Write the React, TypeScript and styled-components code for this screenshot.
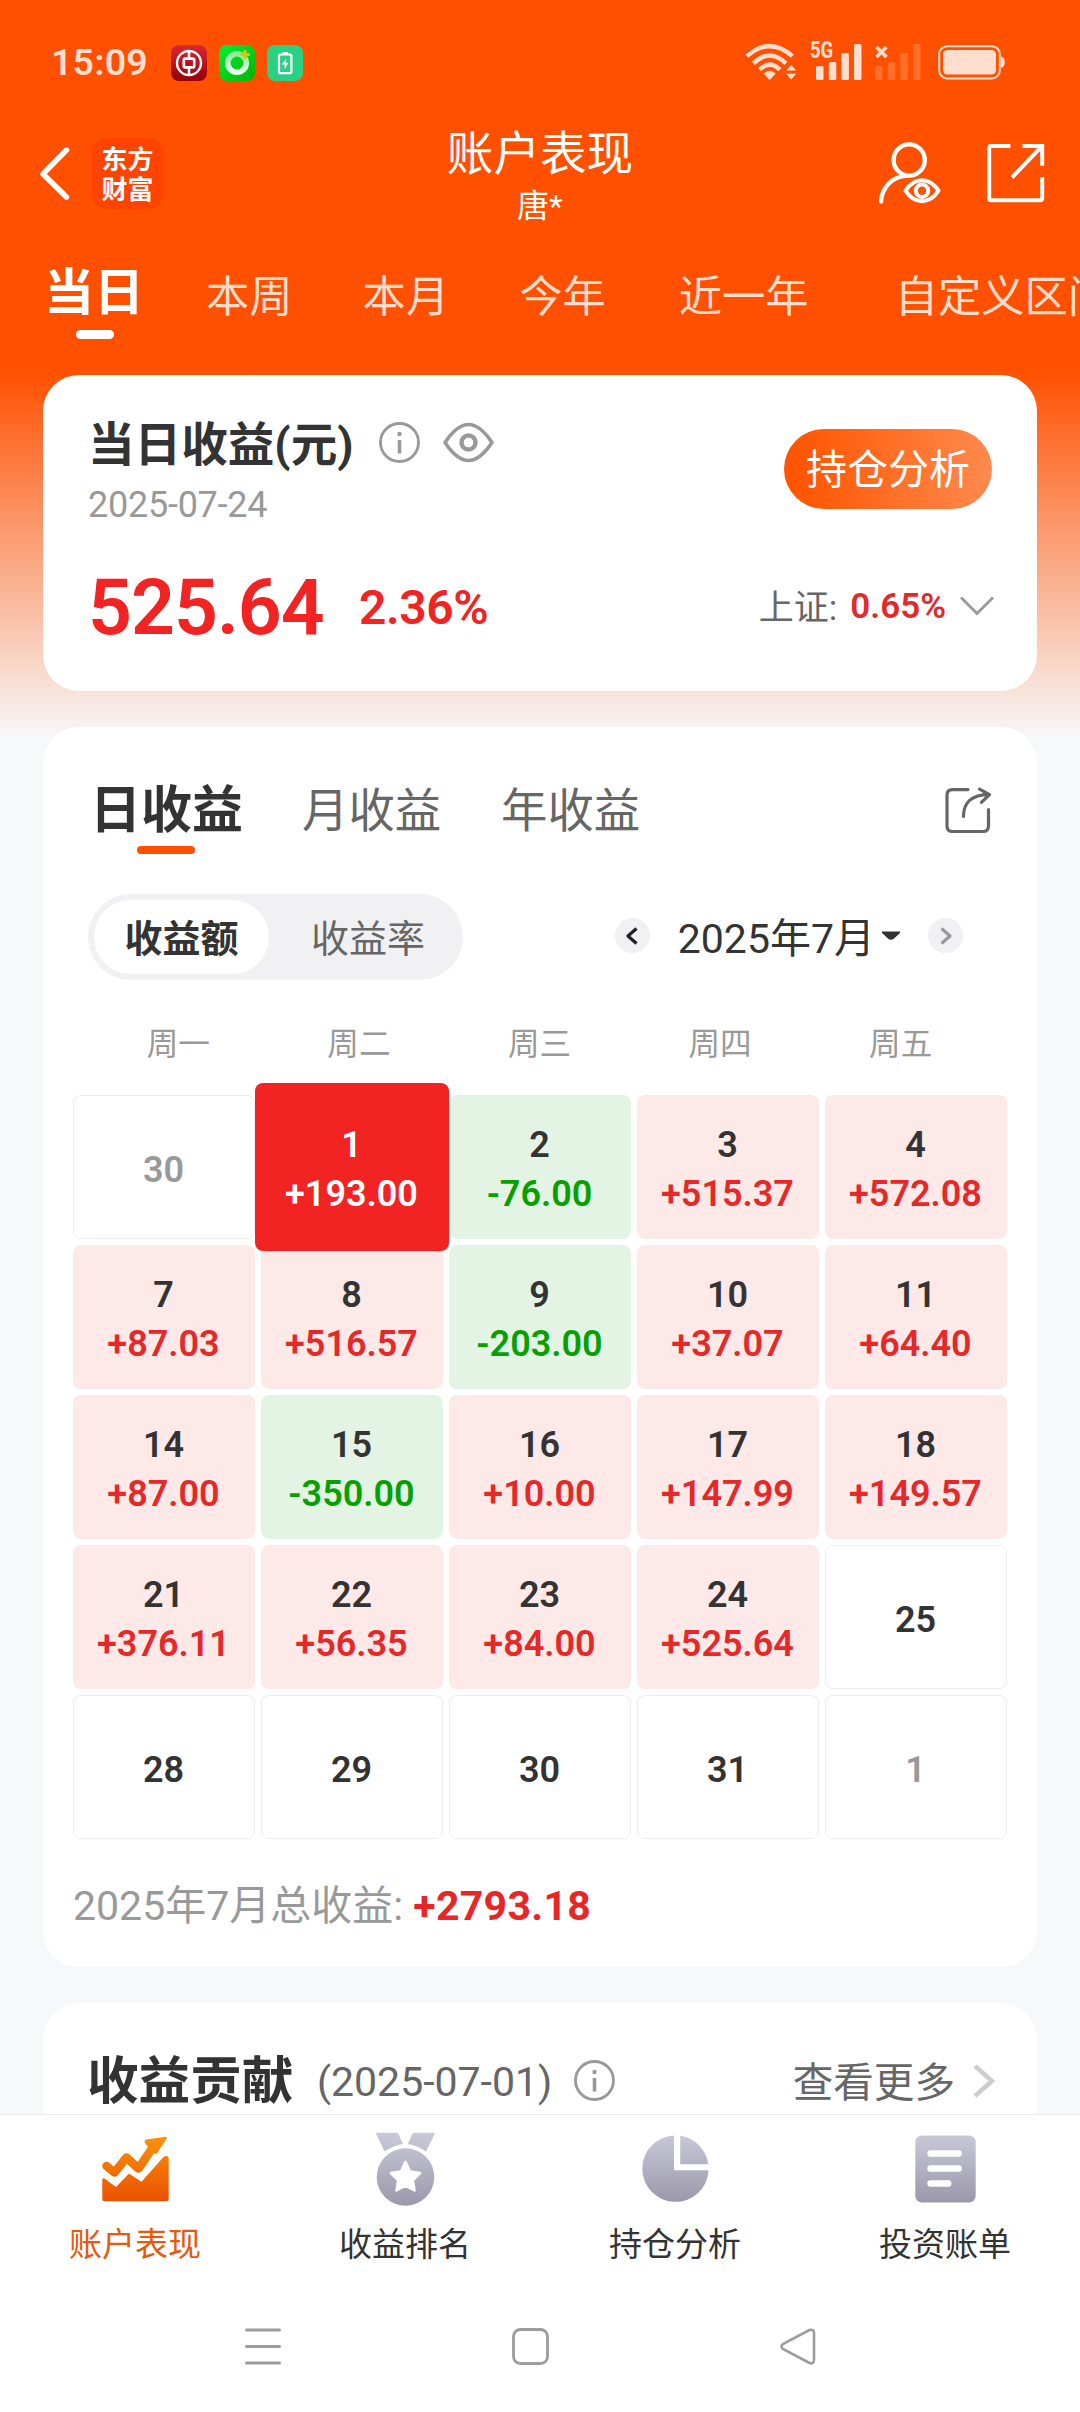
import React from 'react';
import styled, { createGlobalStyle, css } from 'styled-components';

const ORANGE = '#ff5000';
const RED = '#f22323';
const GREEN = '#07a000';

const GlobalStyle = createGlobalStyle`
  * { box-sizing: border-box; }
  body {
    margin: 0;
    font-family: Roboto, "Noto Sans CJK SC", sans-serif;
    color: #333;
  }
  svg { display: block; flex: none; }
`;

const Screen = styled.div`
  width: 1080px;
  height: 2412px;
  overflow: hidden;
  display: flex;
  flex-direction: column;
  background: linear-gradient(180deg, ${ORANGE} 0, ${ORANGE} 370px, #f7f8fa 738px);
`;

/* ---------- status bar ---------- */

const StatusBar = styled.div`
  flex: none;
  height: 124px;
  padding: 0 75px 0 51px;
  display: flex;
  align-items: center;
  color: #ffddcf;
`;

const Clock = styled.span`
  width: 120px;
  font-size: 37.5px;
  line-height: 44px;
  font-weight: 600;
  letter-spacing: 0.2px;
`;

const AppIcons = styled.div`
  display: flex;
  gap: 12px;
  flex: 1;
  padding-top: 2px;
`;

const StatusIcons = styled.div`
  display: flex;
  align-items: center;
`;

const Signal = styled.div<{ $width: number; $gap: number }>`
  position: relative;
  width: ${(p) => p.$width}px;
  height: 38px;
  margin-right: ${(p) => p.$gap}px;
  svg { position: absolute; left: 0; top: 0; }
`;

const NetworkType = styled.span`
  position: absolute;
  left: 0;
  top: -3px;
  font-size: 23px;
  line-height: 22px;
  font-weight: 800;
  transform: scaleX(0.8);
  transform-origin: left;
`;

/* ---------- header ---------- */

const Header = styled.header`
  flex: none;
  height: 104px;
  padding: 0 35px 0 39px;
  display: grid;
  grid-template-columns: 1fr auto 1fr;
  align-items: center;
  color: #fff;
`;

const HeaderSide = styled.div<{ $end?: boolean; $gap: number }>`
  display: flex;
  align-items: center;
  justify-content: ${(p) => (p.$end ? 'flex-end' : 'flex-start')};
  gap: ${(p) => p.$gap}px;
  margin-bottom: 6px;
`;

const Logo = styled.div`
  width: 71px;
  height: 71px;
  border-radius: 15px;
  background: #ff4400;
  display: grid;
  place-content: center;
  text-align: center;
  font-size: 26px;
  line-height: 30px;
  font-weight: 700;
  font-family: "Noto Sans CJK SC", sans-serif;
`;

const TitleBlock = styled.div`
  text-align: center;
  transform: translateX(-2px);
`;

const Title = styled.h1`
  margin: 0;
  font-size: 46.6px;
  line-height: 60px;
  font-weight: 400;
`;

const Subtitle = styled.div`
  font-size: 32px;
  line-height: 44px;
`;

/* ---------- period tabs ---------- */

const PeriodTabs = styled.nav`
  flex: none;
  height: 147px;
  padding: 28px 0 0 44px;
  display: flex;
  gap: 70px;
  overflow: hidden;
  white-space: nowrap;
`;

const PeriodTab = styled.span<{ $active?: boolean; $indent?: number }>`
  position: relative;
  flex: none;
  margin-left: ${(p) => p.$indent ?? 0}px;
  font-size: 43.3px;
  line-height: 84px;
  color: #ffdccc;
  ${(p) =>
    p.$active &&
    css`
      font-size: 50px;
      line-height: 74px;
      font-weight: 700;
      color: #fff;
      margin-right: -8px;
      &::after {
        content: '';
        position: absolute;
        left: 32px;
        top: 74px;
        width: 38px;
        height: 9px;
        border-radius: 5px;
        background: #fff;
      }
    `}
`;

/* ---------- cards ---------- */

const Card = styled.section<{ $height: number; $gap?: number }>`
  flex: none;
  height: ${(p) => p.$height}px;
  margin: 0 43px ${(p) => p.$gap ?? 0}px;
  border-radius: 36px;
  background: #fff;
`;

const SummaryCard = styled(Card)`
  padding: 36px 45px 0 45px;
  display: flex;
  justify-content: space-between;
`;

const SummaryLeft = styled.div``;

const SummaryRight = styled.div`
  display: flex;
  flex-direction: column;
  align-items: flex-end;
`;

const SummaryTitle = styled.div`
  display: flex;
  align-items: center;
  height: 66px;
  font-weight: 700;
  svg { margin-top: -3px; }
  svg + svg { margin-left: 23px; }
`;

const SummaryTitleText = styled.span`
  width: 291px;
  font-size: 46.6px;
  line-height: 66px;
  padding-top: 1px;
`;

const DateText = styled.div`
  margin-top: 6px;
  font-size: 36px;
  line-height: 44px;
  letter-spacing: -0.25px;
  color: #999;
`;

const Amounts = styled.div`
  display: flex;
  align-items: center;
  margin-top: 36px;
  color: ${RED};
  font-weight: 600;
  line-height: 90px;
`;

const Amount = styled.span`
  width: 271px;
  font-size: 77px;
  letter-spacing: -1px;
`;

const Percent = styled.span`
  font-size: 48px;
  letter-spacing: -0.4px;
`;

const AnalysisButton = styled.button`
  margin: 18px 0 0;
  width: 208px;
  height: 80px;
  padding: 2px 0 0;
  border: 0;
  border-radius: 40px;
  background: linear-gradient(90deg, #ff5500 5%, #ff8a4e 100%);
  color: #fff;
  font: 400 41px/78px Roboto, "Noto Sans CJK SC", sans-serif;
`;

const IndexRow = styled.div`
  display: flex;
  align-items: center;
  height: 50px;
  margin: 72px -2px 0 0;
  font-size: 35px;
  color: #666;
  svg { margin-left: 14px; }
`;

const IndexLabel = styled.span`
  margin-top: -3px;
`;

const IndexValue = styled.b`
  margin-left: 13px;
  font-weight: 600;
  color: #e32a2a;
`;

/* ---------- calendar card ---------- */

const CalendarCard = styled(Card)`
  display: flex;
  flex-direction: column;
  padding: 47px 30px 0;
`;

const RangeTabs = styled.div`
  display: flex;
  align-items: center;
  height: 72px;
  padding: 0 15px 0 17px;
`;

const RangeTab = styled.span<{ $active?: boolean }>`
  position: relative;
  width: 199px;
  padding-top: 1px;
  font-size: 46.4px;
  line-height: 72px;
  color: #666;
  ${(p) =>
    p.$active &&
    css`
      width: 212px;
      padding-top: 2px;
      font-size: 51px;
      font-weight: 700;
      color: #333;
      &::after {
        content: '';
        position: absolute;
        left: 47px;
        top: 73px;
        width: 58px;
        height: 8px;
        border-radius: 4px;
        background: ${ORANGE};
      }
    `}
`;

const Spacer = styled.span`
  flex: 1;
`;

const ControlRow = styled.div`
  display: flex;
  align-items: center;
  justify-content: space-between;
  height: 86px;
  margin-top: 48px;
  padding: 0 44px 0 15px;
`;

const Toggle = styled.div`
  display: flex;
  width: 375px;
  height: 86px;
  padding: 6px;
  border-radius: 43px;
  background: #f1f1f4;
`;

const ToggleOption = styled.span<{ $active?: boolean }>`
  flex: ${(p) => (p.$active ? '0 0 175px' : '1')};
  height: 74px;
  padding: 2px 0 0 ${(p) => (p.$active ? 0 : 10)}px;
  border-radius: 37px;
  background: ${(p) => (p.$active ? '#fff' : 'transparent')};
  color: ${(p) => (p.$active ? '#333' : '#666')};
  font-weight: ${(p) => (p.$active ? 700 : 400)};
  font-size: 38px;
  line-height: 74px;
  text-align: center;
`;

const MonthPicker = styled.div`
  display: flex;
  align-items: center;
  margin-top: -3px;
`;

const RoundButton = styled.span`
  width: 35px;
  height: 35px;
  border-radius: 50%;
  background: #f1f1f4;
  display: grid;
  place-items: center;
`;

const MonthLabel = styled.span`
  margin: 6px 7px 0 28px;
  font-size: 41px;
  line-height: 50px;
`;

const CaretBox = styled.span`
  margin-right: 28px;
`;

const Weekdays = styled.div`
  display: grid;
  grid-template-columns: repeat(5, 180.6px);
  margin: 40px 0 0 15px;
  height: 50px;
  line-height: 50px;
  font-size: 31.6px;
  color: #999;
  text-align: center;
`;

const DayGrid = styled.div`
  display: grid;
  grid-template-columns: repeat(5, 182px);
  grid-auto-rows: 144px;
  gap: 6px;
  margin-top: 25px;
`;

type Tone = 'up' | 'down' | 'none' | 'muted' | 'selected';

const toneBackground: Record<Tone, string> = {
  up: '#fde9e8',
  down: '#e3f4e4',
  none: '#fff',
  muted: '#fff',
  selected: RED,
};

const Day = styled.div<{ $tone: Tone }>`
  display: flex;
  flex-direction: column;
  align-items: center;
  justify-content: center;
  padding: 6px 1px 0 0;
  border-radius: 8px;
  border: ${(p) => (p.$tone === 'none' || p.$tone === 'muted' ? '1px solid #ececec' : '0')};
  background: ${(p) => toneBackground[p.$tone]};
  color: ${(p) => (p.$tone === 'muted' ? '#999' : p.$tone === 'selected' ? '#fff' : '#333')};
  font-size: 36px;
  line-height: 49px;
  font-weight: 600;
  ${(p) =>
    p.$tone === 'selected' &&
    css`
      position: relative;
      z-index: 1;
      margin: -12px -6px;
    `}
`;

const Profit = styled.span<{ $tone: Tone }>`
  color: ${(p) => (p.$tone === 'up' ? '#e62828' : p.$tone === 'down' ? GREEN : '#fff')};
`;

const MonthTotal = styled.div`
  margin-top: 39px;
  font-size: 41px;
  line-height: 56px;
  color: #999;
`;

const TotalValue = styled.b`
  font-weight: 700;
  letter-spacing: 0.3px;
  color: #ea2525;
`;

/* ---------- contribution card ---------- */

const ContributionCard = styled(Card)`
  display: flex;
  align-items: center;
  padding: 44px 42px 0 44px;
  border-radius: 36px 36px 0 0;
`;

const ContributionTitle = styled.h2`
  margin: 2px 0 0;
  width: 230px;
  font-size: 51.6px;
  line-height: 64px;
  font-weight: 700;
`;

const ContributionDate = styled.span`
  width: 257px;
  margin-top: 2px;
  font-size: 41px;
  color: #666;
`;

const More = styled.span`
  margin: -2px 18px 0 0;
  font-size: 40.6px;
  color: #666;
`;

/* ---------- bottom bars ---------- */

const BottomTabs = styled.nav`
  flex: none;
  height: 176px;
  border-top: 1px solid #ebebeb;
  background: #fff;
  display: grid;
  grid-template-columns: repeat(4, 1fr);
`;

const BottomTab = styled.div<{ $active?: boolean }>`
  display: flex;
  flex-direction: column;
  align-items: center;
  font-size: 33px;
  line-height: 44px;
  color: ${(p) => (p.$active ? '#e8590c' : '#333')};
`;

const TabIconBox = styled.div`
  height: 108px;
  display: flex;
  align-items: center;
`;

const SystemNav = styled.div`
  flex: 1;
  background: #fff;
  display: flex;
  justify-content: center;
  align-items: center;
  gap: 231px;
  padding: 0 20px 10px 0;
`;

/* ---------- icons ---------- */

const BankIcon = () => (
  <svg width="36" height="36" viewBox="0 0 36 36" fill="none" stroke="#fff">
    <defs>
      <linearGradient id="bank" x1="0" y1="0" x2="0" y2="1">
        <stop offset="0" stopColor="#dc2832" />
        <stop offset="1" stopColor="#96000a" />
      </linearGradient>
    </defs>
    <rect width="36" height="36" rx="8" fill="url(#bank)" stroke="none" />
    <circle cx="18" cy="18" r="12" strokeWidth="2.4" />
    <rect x="12.8" y="13.6" width="10.4" height="8.8" rx="1.5" strokeWidth="2.6" />
    <path d="M18 6v7M18 23v7" strokeWidth="2.6" />
  </svg>
);

const RingIcon = () => (
  <svg width="36" height="36" viewBox="0 0 36 36" fill="none">
    <defs>
      <linearGradient id="ringBg" x1="0" y1="0" x2="1" y2="1">
        <stop offset="0" stopColor="#00f03a" />
        <stop offset="1" stopColor="#00b400" />
      </linearGradient>
      <linearGradient id="ring" x1="0" y1="0" x2="0" y2="1">
        <stop offset="0" stopColor="#8deb90" />
        <stop offset="1" stopColor="#eefcee" />
      </linearGradient>
    </defs>
    <rect width="36" height="36" rx="8" fill="url(#ringBg)" />
    <circle cx="18" cy="18" r="9.3" stroke="url(#ring)" strokeWidth="5.6" />
    <path d="M26 5v9M21.4 9.6h9.4" stroke="#e0c010" strokeWidth="3" />
  </svg>
);

const ChargeIcon = () => (
  <svg width="36" height="36" viewBox="0 0 36 36">
    <rect width="36" height="36" rx="8" fill="#2bd183" />
    <rect x="12" y="9.5" width="12.4" height="18.6" rx="1.5" fill="none" stroke="#fff" strokeWidth="2.2" />
    <path d="M15.5 7h5.4v2h-5.4z" fill="#fff" />
    <path d="M19.4 13.4l-4.6 6h2.8v4.8l3.8-6.4h-2.6z" fill="#fff" />
  </svg>
);

const WifiIcon = () => (
  <svg width="52" height="38" viewBox="0 0 52 38" fill="none" stroke="#ffddcf" strokeWidth="4.4">
    <path d="M2 13.2Q24.7-7 47.4 13.2" />
    <path d="M8.4 20.4Q24.7 4.6 41 20.4" />
    <path d="M14.6 26.6Q24.7 16.6 35 26.6" />
    <path d="M18.6 30.6Q24.7 25 30.8 30.6L24.7 37z" fill="#ffddcf" stroke="none" />
    <path d="M46.2 22l5 5.6h-10zM46.2 36.4l5-5.6h-10z" fill="#ffddcf" stroke="none" />
  </svg>
);

const Bars = ({ x, dim }: { x: number; dim?: boolean }) => (
  <svg width="52" height="38" fill={dim ? '#ff6f2c' : '#ffddcf'}>
    <rect x={x} y="23" width="7.5" height="14" rx="1.5" />
    <rect x={x + 12.8} y="19" width="7.5" height="18" rx="1.5" />
    <rect x={x + 25.4} y="10" width="7.5" height="27" rx="1.5" />
    <rect x={x + 38} y="1" width="7.5" height="36" rx="1.5" />
    {dim && <path d="M1.5 4l10 10M11.5 4l-10 10" stroke="#ffddcf" strokeWidth="3.6" />}
  </svg>
);

const BatteryIcon = () => (
  <svg width="67" height="36" viewBox="0 0 67 36">
    <rect x="1.2" y="2.2" width="60.6" height="32.2" rx="8" fill="none" stroke="#ffddcf" strokeWidth="2" />
    <rect x="5" y="6" width="53" height="24.6" rx="4.5" fill="#ffddcf" />
    <path d="M63 12.5q3.8.8 3.8 5.8T63 24z" fill="#ffddcf" />
  </svg>
);

const BackIcon = () => (
  <svg width="31" height="54" viewBox="0 0 31 54" fill="none" stroke="#fff" strokeWidth="5.4" strokeLinecap="round" strokeLinejoin="round">
    <path d="M27.5 4L4 28l23.5 23" />
  </svg>
);

const PersonIcon = () => (
  <svg width="64" height="62" viewBox="0 0 64 62" fill="none" stroke="#fff" strokeWidth="4.4" strokeLinecap="round">
    <circle cx="32.2" cy="18" r="15.6" />
    <path d="M4 59.5C5 46 14.5 34.4 30 33.6" />
    <path d="M28.5 48.7C33.5 41 39 38.2 45 38.2S56.5 41 61.5 48.7C56.5 56.4 51 59.2 45 59.2S33.5 56.4 28.5 48.7z" strokeWidth="4" strokeLinejoin="round" />
    <circle cx="45" cy="48.7" r="6.2" strokeWidth="4" />
  </svg>
);

const OpenIcon = () => (
  <svg width="59" height="60" viewBox="0 0 59 60" fill="none" stroke="#fff" strokeWidth="4">
    <path d="M24.4 3H5.2Q3.2 3 3.2 5V55.3Q3.2 57.3 5.2 57.3H54.2Q56.2 57.3 56.2 55.3V34" />
    <path d="M36.5 3H56.2V22.7M56 3L26 34.5" />
  </svg>
);

const InfoIcon = () => (
  <svg width="41" height="41" viewBox="0 0 41 41" fill="none" stroke="#999" strokeWidth="2.8">
    <circle cx="20.5" cy="20.5" r="19" />
    <path d="M20.5 18v13.5" strokeWidth="3.6" />
    <circle cx="20.5" cy="12" r="2.2" fill="#999" stroke="none" />
  </svg>
);

const EyeIcon = () => (
  <svg width="51" height="41" viewBox="0 0 51 41" fill="none" stroke="#999" strokeWidth="3.6" strokeLinejoin="round">
    <path d="M2 20.5C10 8.5 17.5 2.5 25.5 2.5S41 8.5 49 20.5C41 32.5 33.5 38.5 25.5 38.5S10 32.5 2 20.5z" />
    <circle cx="25.5" cy="20.5" r="7" strokeWidth="4.4" />
  </svg>
);

const ChevronDown = () => (
  <svg width="34" height="20" viewBox="0 0 34 20" fill="none" stroke="#999" strokeWidth="2.8">
    <path d="M1 1.5l16 16 16-16" />
  </svg>
);

const ShareIcon = () => (
  <svg width="47" height="47" viewBox="0 0 47 47" fill="none" stroke="#666" strokeWidth="3.2" strokeLinecap="round" strokeLinejoin="round">
    <path d="M23 2.6H7.5Q2 2.6 2 8V39Q2 44.5 7.5 44.5H38Q43.500 44.5 43.5 39V22.5" />
    <path d="M18.5 29.5C18.5 15 27 7.6 44 7.6M34.5 2.2L44.6 7.6 36.4 15.4" />
  </svg>
);

const SmallChevron = ({ next }: { next?: boolean }) => (
  <svg width="14" height="18" viewBox="0 0 14 18" fill="none" stroke={next ? '#999' : '#222'} strokeWidth="3.2" strokeLinejoin="round">
    <path d={next ? 'M2.5 1.5L11 9l-8.5 7.5' : 'M11.5 1.5L3 9l8.5 7.5'} />
  </svg>
);

const Caret = () => (
  <svg width="18" height="9" viewBox="0 0 18 9">
    <path d="M0 .5h18v1.5L11.5 8q-2.500 1.500-5 0L0 2z" fill="#333" />
  </svg>
);

const ChevronRight = () => (
  <svg width="22" height="34" viewBox="0 0 22 34" fill="none" stroke="#ccc" strokeWidth="4.4">
    <path d="M2 2l17 15L2 32" />
  </svg>
);

const TrendIcon = () => (
  <svg width="67" height="66" viewBox="0 0 67 66">
    <defs>
      <linearGradient id="trend" gradientUnits="userSpaceOnUse" x1="0" y1="0" x2="0" y2="66">
        <stop offset="0" stopColor="#f99409" />
        <stop offset="1" stopColor="#ea5000" />
      </linearGradient>
    </defs>
    <path d="M4.5 30L12.5 36.5 24.5 21.5 36.5 32.5 51 11" fill="none" stroke="url(#trend)" strokeWidth="8.5" strokeLinecap="round" strokeLinejoin="round" />
    <path d="M44 3.6L63.5 .7q2 0 1.2 2L54 18.5 46.5 11.5 42.8 6.5q-.6-2.4 1.2-2.9z" fill="url(#trend)" />
    <path d="M.3 43.5q.8-2 2.8-.6L14 51 27 37.5 39.5 45.7 61.5 21q4-2.5 5.2 1V63q0 2.3-2.3 2.3H2.6Q.3 65.3 .3 63z" fill="url(#trend)" />
  </svg>
);

const MedalIcon = () => (
  <svg width="59" height="74" viewBox="0 0 59 74">
    <defs>
      <linearGradient id="medal" gradientUnits="userSpaceOnUse" x1="0" y1="0" x2="0" y2="74">
        <stop offset="0" stopColor="#cbcada" />
        <stop offset="1" stopColor="#9a98aa" />
      </linearGradient>
    </defs>
    <path d="M1.2 .7H20.5q1.5 0 2 1.3L26.8 12Q17 13.5 8.7 19.5L.3 2.5q-.6-1.5 .9-1.8z" fill="url(#medal)" />
    <path d="M57.6 .7H38.3q-1.5 0-2 1.3L31.9 12Q41.5 13.5 49.9 19.5L58.5 2.5q.6-1.5-.9-1.8z" fill="url(#medal)" />
    <circle cx="29.5" cy="45" r="28.8" fill="url(#medal)" />
    <path d="M29.5 30l4.6 9.6 10 1.5-7.3 7.3 1.7 10-9-4.7-9 4.7 1.7-10-7.3-7.3 10-1.5z" fill="#fff" stroke="#fff" strokeWidth="2.6" strokeLinejoin="round" />
  </svg>
);

const PieIcon = () => (
  <svg width="67" height="68" viewBox="0 0 67 68">
    <defs>
      <linearGradient id="pie" gradientUnits="userSpaceOnUse" x1="0" y1="0" x2="0" y2="67">
        <stop offset="0" stopColor="#c9c8d8" />
        <stop offset="1" stopColor="#9a98aa" />
      </linearGradient>
    </defs>
    <path d="M32 .5A33.2 33.2 0 1 0 66.6 35.3H32z" fill="url(#pie)" />
    <path d="M38.2 .8A33.2 33.2 0 0 1 66.2 29.3H38.2z" fill="url(#pie)" />
  </svg>
);

const BillIcon = () => (
  <svg width="61" height="68" viewBox="0 0 61 68">
    <defs>
      <linearGradient id="bill" x1="0" y1="0" x2="0" y2="1">
        <stop offset="0" stopColor="#c9c8d8" />
        <stop offset="1" stopColor="#9a98aa" />
      </linearGradient>
    </defs>
    <rect x=".3" y=".5" width="60.4" height="67" rx="6.5" fill="url(#bill)" />
    <path d="M15.5 18.5h28.2M15.5 33.5h28.2M15.5 48.5h17.8" stroke="#fff" strokeWidth="6.4" strokeLinecap="round" />
  </svg>
);

const MenuKey = () => (
  <svg width="36" height="37" viewBox="0 0 36 37" stroke="#9c9c9c" strokeWidth="3" strokeLinecap="round">
    <path d="M1.5 2h33M1.5 18.5h33M1.5 35h33" />
  </svg>
);

const HomeKey = () => (
  <svg width="37" height="37" viewBox="0 0 37 37" fill="none" stroke="#9c9c9c" strokeWidth="2.8">
    <rect x="1.5" y="1.5" width="34" height="34" rx="7" />
  </svg>
);

const BackKey = () => (
  <svg width="36" height="37" viewBox="0 0 36 37" fill="none" stroke="#9c9c9c" strokeWidth="2.6" strokeLinejoin="round">
    <path d="M2.8 16.2L29.5 2Q34 .8 34 5V32Q34 36.2 29.5 35L2.8 20.8Q.2 18.5 2.8 16.2z" />
  </svg>
);

/* ---------- data ---------- */

const periods: { label: string; indent?: number }[] = [
  { label: '当日' },
  { label: '本周' },
  { label: '本月' },
  { label: '今年' },
  { label: '近一年', indent: 3 },
  { label: '自定义区间', indent: 16 },
];

const weekdays = ['周一', '周二', '周三', '周四', '周五'];

const days: [string, string?, Tone?][] = [
  ['30', undefined, 'muted'], ['1', '+193.00', 'selected'], ['2', '-76.00'], ['3', '+515.37'], ['4', '+572.08'],
  ['7', '+87.03'], ['8', '+516.57'], ['9', '-203.00'], ['10', '+37.07'], ['11', '+64.40'],
  ['14', '+87.00'], ['15', '-350.00'], ['16', '+10.00'], ['17', '+147.99'], ['18', '+149.57'],
  ['21', '+376.11'], ['22', '+56.35'], ['23', '+84.00'], ['24', '+525.64'], ['25'],
  ['28'], ['29'], ['30'], ['31'], ['1', undefined, 'muted'],
];

const toneOf = (profit?: string): Tone => (!profit ? 'none' : profit[0] === '-' ? 'down' : 'up');

const bottomTabs = [
  { label: '账户表现', icon: <TrendIcon /> },
  { label: '收益排名', icon: <MedalIcon /> },
  { label: '持仓分析', icon: <PieIcon /> },
  { label: '投资账单', icon: <BillIcon /> },
];

export default function App() {
  return (
    <>
      <GlobalStyle />
      <Screen>
        <StatusBar>
          <Clock>15:09</Clock>
          <AppIcons>
            <BankIcon />
            <RingIcon />
            <ChargeIcon />
          </AppIcons>
          <StatusIcons>
            <Signal $width={52} $gap={13}>
              <WifiIcon />
            </Signal>
            <Signal $width={52} $gap={13}>
              <NetworkType>5G</NetworkType>
              <Bars x={6} />
            </Signal>
            <Signal $width={46} $gap={17}>
              <Bars x={0} dim />
            </Signal>
            <BatteryIcon />
          </StatusIcons>
        </StatusBar>

        <Header>
          <HeaderSide $gap={22}>
            <BackIcon />
            <Logo>
              东方
              <br />
              财富
            </Logo>
          </HeaderSide>
          <TitleBlock>
            <Title>账户表现</Title>
            <Subtitle>唐*</Subtitle>
          </TitleBlock>
          <HeaderSide $end $gap={45}>
            <PersonIcon />
            <OpenIcon />
          </HeaderSide>
        </Header>

        <PeriodTabs>
          {periods.map((period, i) => (
            <PeriodTab key={period.label} $active={i === 0} $indent={period.indent}>
              {period.label}
            </PeriodTab>
          ))}
        </PeriodTabs>

        <SummaryCard $height={316} $gap={36}>
          <SummaryLeft>
            <SummaryTitle>
              <SummaryTitleText>当日收益(元)</SummaryTitleText>
              <InfoIcon />
              <EyeIcon />
            </SummaryTitle>
            <DateText>2025-07-24</DateText>
            <Amounts>
              <Amount>525.64</Amount>
              <Percent>2.36%</Percent>
            </Amounts>
          </SummaryLeft>
          <SummaryRight>
            <AnalysisButton>持仓分析</AnalysisButton>
            <IndexRow>
              <IndexLabel>上证:</IndexLabel>
              <IndexValue>0.65%</IndexValue>
              <ChevronDown />
            </IndexRow>
          </SummaryRight>
        </SummaryCard>

        <CalendarCard $height={1240} $gap={36}>
          <RangeTabs>
            <RangeTab $active>日收益</RangeTab>
            <RangeTab>月收益</RangeTab>
            <RangeTab>年收益</RangeTab>
            <Spacer />
            <ShareIcon />
          </RangeTabs>

          <ControlRow>
            <Toggle>
              <ToggleOption $active>收益额</ToggleOption>
              <ToggleOption>收益率</ToggleOption>
            </Toggle>
            <MonthPicker>
              <RoundButton>
                <SmallChevron />
              </RoundButton>
              <MonthLabel>2025年7月</MonthLabel>
              <CaretBox>
                <Caret />
              </CaretBox>
              <RoundButton>
                <SmallChevron next />
              </RoundButton>
            </MonthPicker>
          </ControlRow>

          <Weekdays>
            {weekdays.map((d) => (
              <span key={d}>{d}</span>
            ))}
          </Weekdays>

          <DayGrid>
            {days.map(([day, profit, fixedTone], i) => {
              const tone = fixedTone ?? toneOf(profit);
              return (
                <Day key={i} $tone={tone}>
                  <span>{day}</span>
                  {profit && <Profit $tone={tone}>{profit}</Profit>}
                </Day>
              );
            })}
          </DayGrid>

          <MonthTotal>
            2025年7月总收益: <TotalValue>+2793.18</TotalValue>
          </MonthTotal>
        </CalendarCard>

        <ContributionCard $height={111}>
          <ContributionTitle>收益贡献</ContributionTitle>
          <ContributionDate>(2025-07-01)</ContributionDate>
          <InfoIcon />
          <Spacer />
          <More>查看更多</More>
          <ChevronRight />
        </ContributionCard>

        <BottomTabs>
          {bottomTabs.map((tab, i) => (
            <BottomTab key={tab.label} $active={i === 0}>
              <TabIconBox>{tab.icon}</TabIconBox>
              {tab.label}
            </BottomTab>
          ))}
        </BottomTabs>

        <SystemNav>
          <MenuKey />
          <HomeKey />
          <BackKey />
        </SystemNav>
      </Screen>
    </>
  );
}
